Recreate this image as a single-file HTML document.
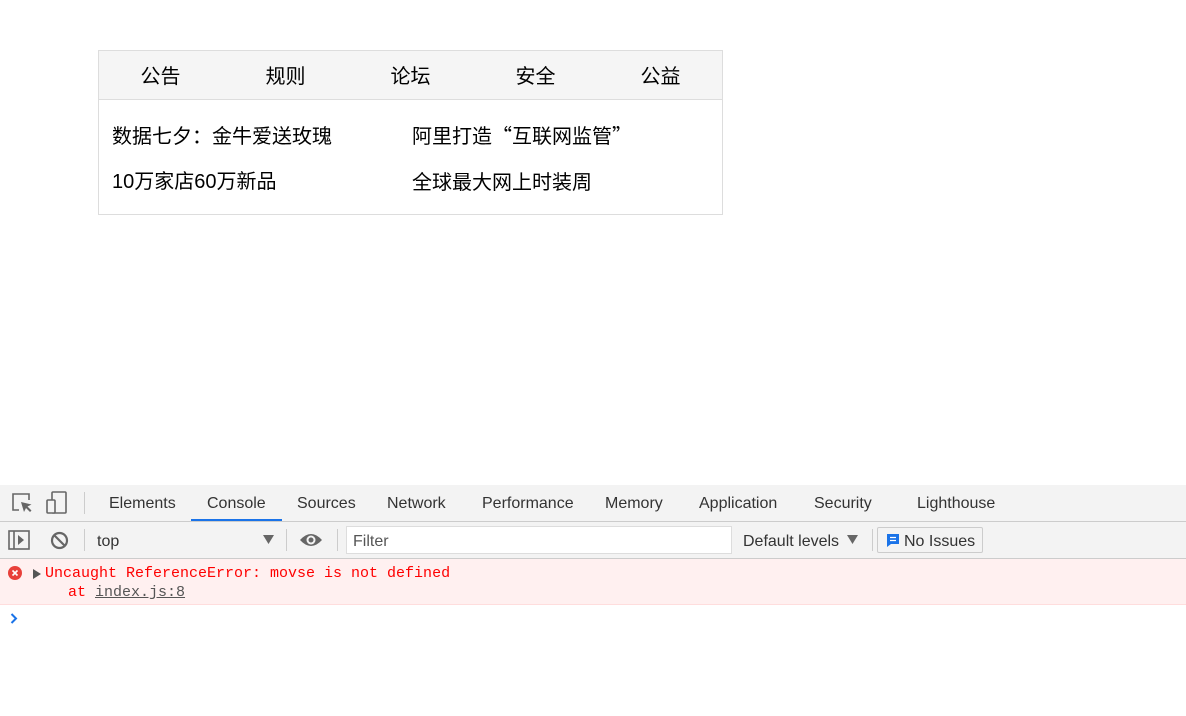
<!DOCTYPE html>
<html><head><meta charset="utf-8"><style>
*{margin:0;padding:0;box-sizing:border-box}
body{width:1186px;height:716px;overflow:hidden;background:#fff;font-family:"Liberation Sans","Noto Sans CJK SC",sans-serif;position:relative}
.a{position:absolute;white-space:nowrap}
.box{left:98px;top:50px;width:625px;height:165px;border:1px solid #ddd}
.hd{left:0;top:0;width:623px;height:49px;background:#f5f5f5;border-bottom:1px solid #ddd}
.hd span{position:absolute;top:9px;width:125px;text-align:center;font-size:20px;color:#000;font-family:"Noto Sans CJK SC",sans-serif;line-height:30px}
.c{font-size:20px;color:#000;font-family:"Liberation Sans","Noto Sans CJK SC",sans-serif;line-height:30px;height:30px}
.q{font-family:"Noto Sans CJK SC",sans-serif}
.dt{font-family:"Liberation Sans","DejaVu Sans",sans-serif;font-size:16px;color:#333}
</style></head><body>
<div class="a box">
 <div class="a hd">
  <span style="left:-1px">公告</span><span style="left:124px">规则</span><span style="left:249px">论坛</span><span style="left:374px">安全</span><span style="left:499px">公益</span>
 </div>
 <div class="a c q" style="left:13px;top:69px">数据七夕：金牛爱送玫瑰</div>
 <div class="a c q" style="left:313px;top:69px">阿里打造“互联网监管”</div>
 <div class="a c" style="left:13px;top:116px">10万家店60万新品</div>
 <div class="a c q" style="left:313px;top:115px">全球最大网上时装周</div>
</div>

<div class="a" style="left:0;top:485px;width:1186px;height:37px;background:#f3f3f3;border-bottom:1px solid #ccc"></div>
<svg class="a" style="left:10px;top:491px" width="24" height="24" viewBox="0 0 24 24"><path d="M9 19H3V3h16v6" fill="none" stroke="#666" stroke-width="1.6"/><path d="M11 11l3 10 2-4 4 4 1.5-1.5-4-4 4-2z" fill="#666"/></svg>
<svg class="a" style="left:45px;top:490px" width="26" height="26" viewBox="0 0 26 26"><rect x="7" y="2" width="14" height="21" rx="1" fill="none" stroke="#666" stroke-width="1.6"/><rect x="2" y="10" width="8" height="13" rx="1" fill="#f3f3f3" stroke="#666" stroke-width="1.6"/></svg>
<div class="a" style="left:84px;top:492px;width:1px;height:22px;background:#ccc"></div>
<div class="a dt" style="left:109px;top:495px">Elements</div>
<div class="a dt" style="left:207px;top:495px">Console</div>
<div class="a" style="left:191px;top:519px;width:91px;height:2px;background:#1a73e8"></div>
<div class="a dt" style="left:297px;top:495px">Sources</div>
<div class="a dt" style="left:387px;top:495px">Network</div>
<div class="a dt" style="left:482px;top:495px">Performance</div>
<div class="a dt" style="left:605px;top:495px">Memory</div>
<div class="a dt" style="left:699px;top:495px">Application</div>
<div class="a dt" style="left:814px;top:495px">Security</div>
<div class="a dt" style="left:917px;top:495px">Lighthouse</div>

<div class="a" style="left:0;top:522px;width:1186px;height:37px;background:#f3f3f3;border-bottom:1px solid #ccc"></div>
<svg class="a" style="left:8px;top:530px" width="22" height="20" viewBox="0 0 22 20"><rect x="1" y="1" width="20" height="18" fill="none" stroke="#666" stroke-width="1.6"/><path d="M6 1v18" stroke="#666" stroke-width="1.6"/><path d="M10 5l6 5-6 5z" fill="#666"/></svg>
<svg class="a" style="left:50px;top:531px" width="19" height="19" viewBox="0 0 19 19"><circle cx="9.5" cy="9.5" r="7.5" fill="none" stroke="#666" stroke-width="2.2"/><path d="M4 4l11 11" stroke="#666" stroke-width="2.2"/></svg>
<div class="a" style="left:84px;top:529px;width:1px;height:22px;background:#ccc"></div>
<div class="a dt" style="left:97px;top:533px">top</div>
<svg class="a" style="left:263px;top:535px" width="11" height="9"><path d="M0 0h11L5.5 9z" fill="#666"/></svg>
<div class="a" style="left:286px;top:529px;width:1px;height:22px;background:#ccc"></div>
<svg class="a" style="left:299px;top:532px" width="24" height="16" viewBox="0 0 24 16"><path d="M1 8Q12-4 23 8Q12 20 1 8z" fill="#666"/><circle cx="12" cy="8" r="4.5" fill="#f3f3f3"/><circle cx="12" cy="8" r="2.5" fill="#666"/></svg>
<div class="a" style="left:337px;top:529px;width:1px;height:22px;background:#ccc"></div>
<div class="a" style="left:346px;top:526px;width:386px;height:28px;background:#fff;border:1px solid #ddd"></div>
<div class="a dt" style="left:353px;top:533px;color:#555">Filter</div>
<div class="a dt" style="left:743px;top:533px">Default levels</div>
<svg class="a" style="left:847px;top:535px" width="11" height="9"><path d="M0 0h11L5.5 9z" fill="#666"/></svg>
<div class="a" style="left:872px;top:529px;width:1px;height:22px;background:#ccc"></div>
<div class="a" style="left:877px;top:527px;width:106px;height:26px;border:1px solid #ccc;border-radius:2px"></div>
<svg class="a" style="left:887px;top:534px" width="12" height="13"><path d="M0 0h12v10H4l-4 3z" fill="#1a73e8"/><path d="M3 3.5h6M3 6.5h6" stroke="#fff" stroke-width="1.3"/></svg>
<div class="a dt" style="left:904px;top:533px">No Issues</div>

<div class="a" style="left:0;top:559px;width:1186px;height:46px;background:#fff0f0;border-bottom:1px solid #fdd"></div>
<svg class="a" style="left:8px;top:566px" width="14" height="14"><circle cx="7" cy="7" r="7" fill="#e8403a"/><path d="M4.5 4.5l5 5M9.5 4.5l-5 5" stroke="#fff" stroke-width="1.6"/></svg>
<svg class="a" style="left:33px;top:569px" width="8" height="10"><path d="M0 0l8 5-8 5z" fill="#555"/></svg>
<div class="a" style="left:45px;top:565px;font-family:'Liberation Mono',monospace;font-size:15px;color:#f00">Uncaught ReferenceError: movse is not defined</div>
<div class="a" style="left:68px;top:584px;font-family:'Liberation Mono',monospace;font-size:15px;color:#f00">at <span style="color:#555;text-decoration:underline">index.js:8</span></div>
<svg class="a" style="left:10px;top:613px" width="8" height="11"><path d="M1.5 1l4.5 4.5-4.5 4.5" fill="none" stroke="#1a73e8" stroke-width="2"/></svg>
</body></html>
